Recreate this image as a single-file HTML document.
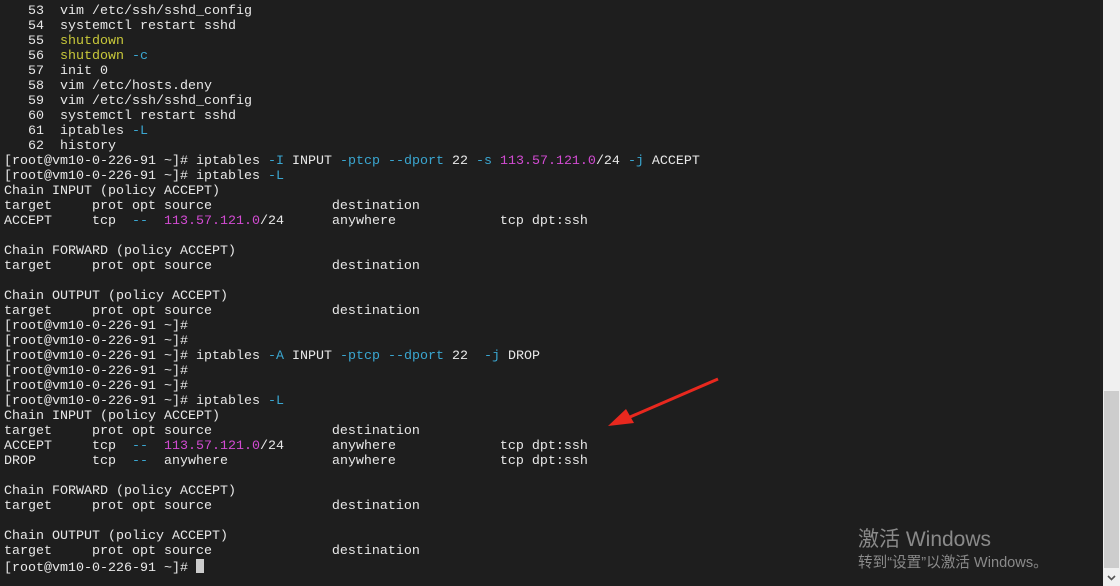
<!DOCTYPE html><html><head><meta charset="utf-8"><style>
body{margin:0;width:1120px;height:586px;background:#1e1e1e;overflow:hidden;position:relative}
.t{position:absolute;left:4px;top:4px;font-family:"Liberation Mono",monospace;font-size:13.33px;color:#e8e8e8}
.t div{height:15px;line-height:15px;white-space:pre;overflow:hidden}
.y{color:#c8c83a}.c{color:#3aa6d0}.m{color:#d24bd2}
.cur{background:#ccc;display:inline-block;width:8px;height:14px;vertical-align:-2px}
.sb{position:absolute;left:1103px;top:0;width:17px;height:586px;background:#f0f0f0}
.th{position:absolute;left:1104px;top:391px;width:15px;height:177px;background:#cdcdcd}
.wm{position:absolute;left:858px;font-family:"Liberation Sans","Noto Sans CJK SC",sans-serif;color:#8a8a8a;white-space:nowrap}
</style></head><body>
<div class="t">
<div>   53  vim /etc/ssh/sshd_config</div>
<div>   54  systemctl restart sshd</div>
<div>   55  <span class="y">shutdown</span></div>
<div>   56  <span class="y">shutdown</span> <span class="c">-c</span></div>
<div>   57  init 0</div>
<div>   58  vim /etc/hosts.deny</div>
<div>   59  vim /etc/ssh/sshd_config</div>
<div>   60  systemctl restart sshd</div>
<div>   61  iptables <span class="c">-L</span></div>
<div>   62  history</div>
<div>[root@vm10-0-226-91 ~]# iptables <span class="c">-I</span> INPUT <span class="c">-ptcp</span> <span class="c">--dport</span> 22 <span class="c">-s</span> <span class="m">113.57.121.0</span>/24 <span class="c">-j</span> ACCEPT</div>
<div>[root@vm10-0-226-91 ~]# iptables <span class="c">-L</span></div>
<div>Chain INPUT (policy ACCEPT)</div>
<div>target     prot opt source               destination</div>
<div>ACCEPT     tcp  <span class="c">--</span>  <span class="m">113.57.121.0</span>/24      anywhere             tcp dpt:ssh</div>
<div> </div>
<div>Chain FORWARD (policy ACCEPT)</div>
<div>target     prot opt source               destination</div>
<div> </div>
<div>Chain OUTPUT (policy ACCEPT)</div>
<div>target     prot opt source               destination</div>
<div>[root@vm10-0-226-91 ~]#</div>
<div>[root@vm10-0-226-91 ~]#</div>
<div>[root@vm10-0-226-91 ~]# iptables <span class="c">-A</span> INPUT <span class="c">-ptcp</span> <span class="c">--dport</span> 22  <span class="c">-j</span> DROP</div>
<div>[root@vm10-0-226-91 ~]#</div>
<div>[root@vm10-0-226-91 ~]#</div>
<div>[root@vm10-0-226-91 ~]# iptables <span class="c">-L</span></div>
<div>Chain INPUT (policy ACCEPT)</div>
<div>target     prot opt source               destination</div>
<div>ACCEPT     tcp  <span class="c">--</span>  <span class="m">113.57.121.0</span>/24      anywhere             tcp dpt:ssh</div>
<div>DROP       tcp  <span class="c">--</span>  anywhere             anywhere             tcp dpt:ssh</div>
<div> </div>
<div>Chain FORWARD (policy ACCEPT)</div>
<div>target     prot opt source               destination</div>
<div> </div>
<div>Chain OUTPUT (policy ACCEPT)</div>
<div>target     prot opt source               destination</div>
<div>[root@vm10-0-226-91 ~]# <span class="cur"></span></div>
</div>
<svg style="position:absolute;left:0;top:0" width="1120" height="586"><line x1="718" y1="379" x2="630" y2="417" stroke="#e8281e" stroke-width="3"/><polygon points="608,426 626,409 634,423" fill="#e8281e"/></svg>
<div class="wm" style="top:523px;font-size:21px">激活 Windows</div>
<div class="wm" style="top:551px;font-size:14.6px">转到“设置”以激活 Windows。</div>
<div class="sb"></div><div class="th"></div>
<svg style="position:absolute;left:1106px;top:574px" width="11" height="8"><polyline points="2,2 5.5,5.5 9,2" fill="none" stroke="#555" stroke-width="1.6"/></svg>
</body></html>
